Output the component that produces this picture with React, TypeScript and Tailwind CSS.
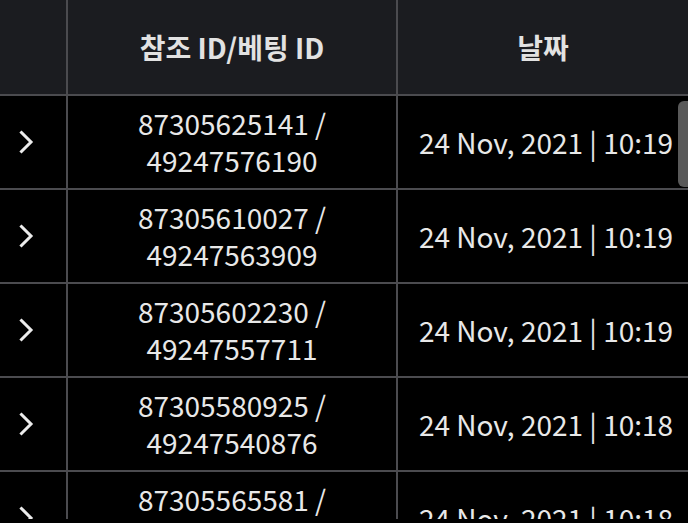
const rows = [
  { ref: "87305625141", bet: "49247576190", date: "24 Nov, 2021 | 10:19" },
  { ref: "87305610027", bet: "49247563909", date: "24 Nov, 2021 | 10:19" },
  { ref: "87305602230", bet: "49247557711", date: "24 Nov, 2021 | 10:19" },
  { ref: "87305580925", bet: "49247540876", date: "24 Nov, 2021 | 10:18" },
  { ref: "87305565581", bet: "49247528113", date: "24 Nov, 2021 | 10:18" },
];

const Chevron = () => (
  <svg width="15" height="24" viewBox="0 0 15 24" fill="none">
    <path d="M2.5 2.5 L12 12 L2.5 21.5" stroke="#ececec" strokeWidth="3" strokeLinecap="square" />
  </svg>
);

export default function App() {
  return (
    <div
      className="w-[688px] h-[523px] bg-black text-[#e8e8e8] overflow-hidden"
      style={{ fontFamily: '"Noto Sans CJK KR", "Noto Sans", sans-serif' }}
    >
      <div className="relative h-[519px] overflow-hidden">
        {/* header */}
        <div className="grid grid-cols-[68px_330px_1fr] h-[96px] bg-[#1b1c20] border-b-2 border-[#4b4b4f]">
          <div className="border-r-2 border-[#4b4b4f]" />
          <div className="border-r-2 border-[#4b4b4f] flex items-center justify-center text-[28px] font-bold text-[#e2e2e2]">
            참조 ID/베팅 ID
          </div>
          <div className="flex items-center justify-center text-[28px] font-bold text-[#e2e2e2]">날짜</div>
        </div>

        {rows.map((r) => (
          <div key={r.ref} className="grid grid-cols-[68px_330px_1fr] h-[94px] border-b-2 border-[#4b4b4f]">
            <div className="border-r-2 border-[#4b4b4f] flex items-center pl-[19px]">
              <Chevron />
            </div>
            <div className="border-r-2 border-[#4b4b4f] flex flex-col items-center justify-center text-[28px] leading-[37px]">
              <span>{r.ref} /</span>
              <span>{r.bet}</span>
            </div>
            <div className="flex items-center justify-center pl-[6px] text-[28px] whitespace-nowrap">{r.date}</div>
          </div>
        ))}

        {/* scrollbar thumb */}
        <div className="absolute right-0 top-[101px] w-[10px] h-[86px] rounded-l-md bg-[#595959]" />
      </div>
    </div>
  );
}
